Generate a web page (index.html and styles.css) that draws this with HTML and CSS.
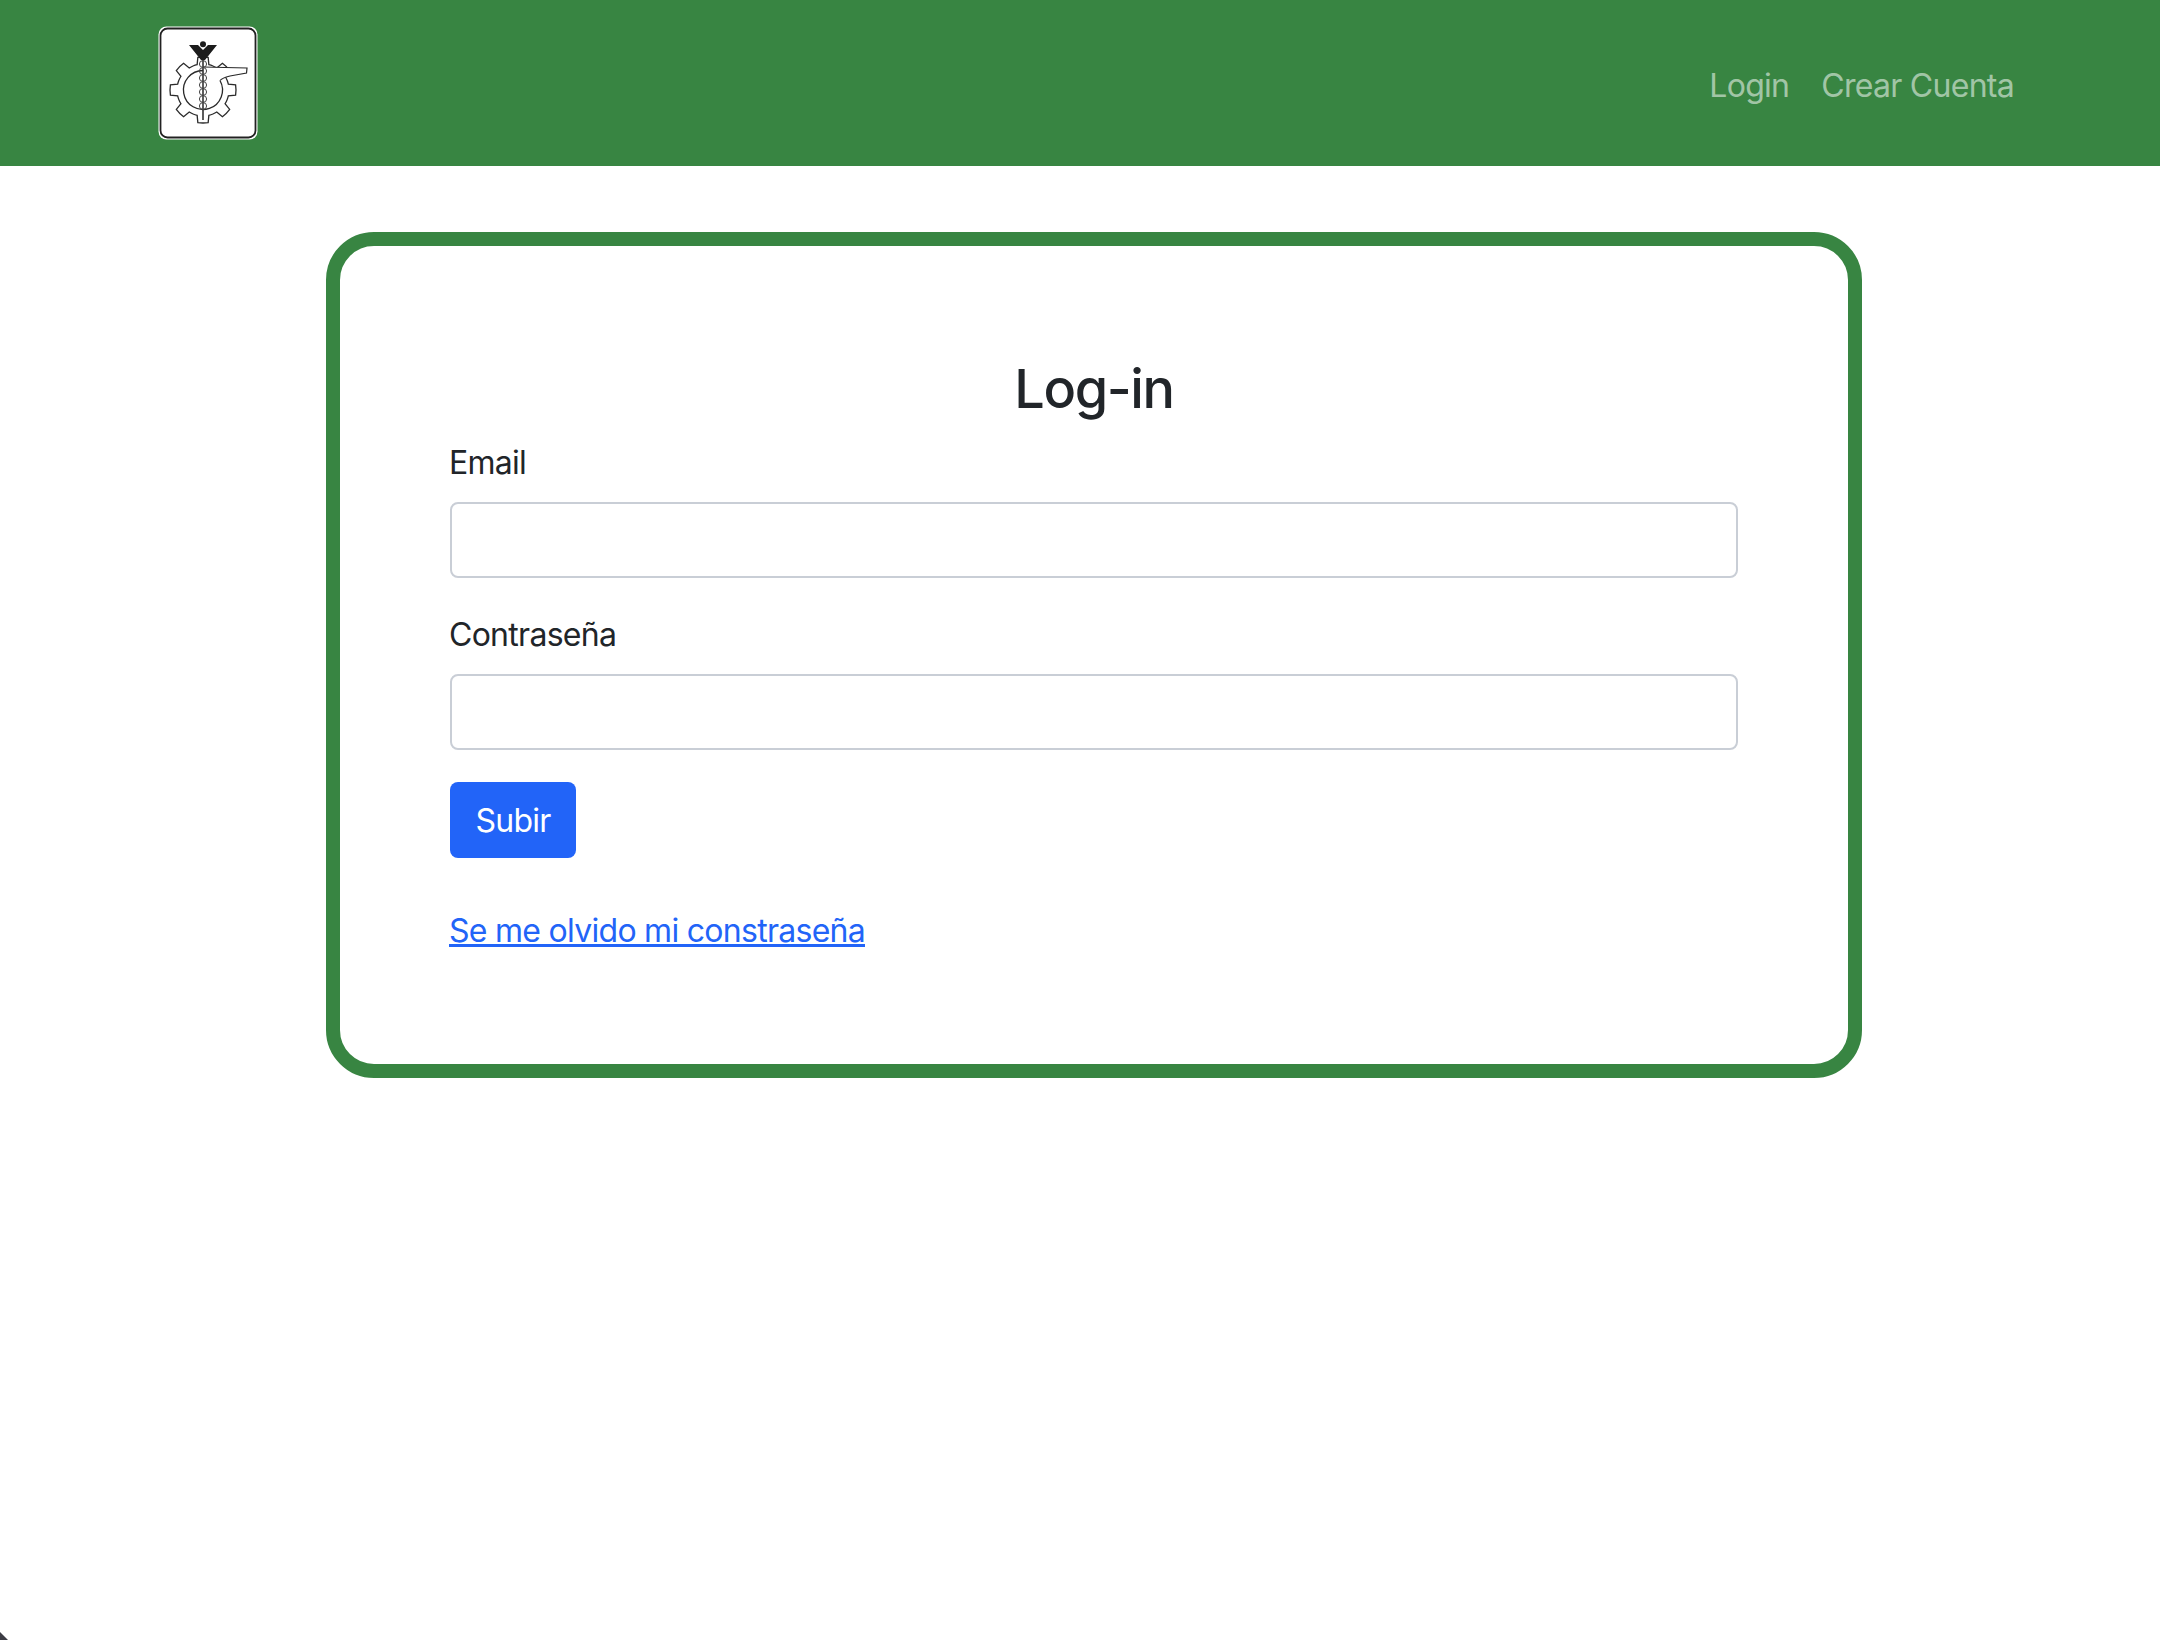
FILE: index.html
```html
<!DOCTYPE html>
<html lang="es">
<head>
<meta charset="utf-8">
<title>Log-in</title>
<link rel="stylesheet" href="styles.css">
</head>
<body>
<header class="navbar">
  <a class="brand" href="#" aria-label="Inicio">
    <svg class="logo" viewBox="0 0 100 114" width="100" height="114" aria-hidden="true">
      <defs>
        <path id="tooth" d="M35.05 40A26 26 0 0 1 39.15 38.67L39.84 31.4A33 33 0 0 1 50.16 31.4L50.85 38.67A26 26 0 0 1 54.95 40"/>
      </defs>
      <rect x="0.5" y="0.5" width="99" height="113" rx="8" fill="#fff"/>
      <rect x="2.5" y="2.5" width="95" height="109" rx="7" fill="#fff" stroke="#222" stroke-width="1.8"/>
      <g fill="none" stroke="#2a2a2a" stroke-width="1.3">
        <use href="#tooth"/>
        <use href="#tooth" transform="rotate(45 45 64)"/>
        <use href="#tooth" transform="rotate(90 45 64)"/>
        <use href="#tooth" transform="rotate(135 45 64)"/>
        <use href="#tooth" transform="rotate(180 45 64)"/>
        <use href="#tooth" transform="rotate(225 45 64)"/>
        <use href="#tooth" transform="rotate(270 45 64)"/>
        <use href="#tooth" transform="rotate(315 45 64)"/>
      </g>
      <path d="M62 54.5A19.5 19.5 0 1 1 45 44.5" fill="none" stroke="#2a2a2a" stroke-width="1.3"/>
      <path d="M45 41L89 42L88.5 47L72 50Q64 52 62 54.5L58 50L45 44.5Z" fill="#fff"/>
      <path d="M45 41L89 42L88.5 47L72 50Q64 52 62 54.5" fill="none" stroke="#2a2a2a" stroke-width="1.2"/>
      <path d="M45 30V94" stroke="#333" stroke-width="1.6"/>
      <g fill="none" stroke="#444" stroke-width="1">
        <ellipse cx="45" cy="38" rx="3.6" ry="3.4"/>
        <ellipse cx="45" cy="45" rx="3.6" ry="3.4"/>
        <ellipse cx="45" cy="52" rx="3.6" ry="3.4"/>
        <ellipse cx="45" cy="59" rx="3.6" ry="3.4"/>
        <ellipse cx="45" cy="66" rx="3.6" ry="3.4"/>
        <ellipse cx="45" cy="73" rx="3.6" ry="3.4"/>
        <ellipse cx="45" cy="80" rx="3.6" ry="3.4"/>
      </g>
      <path d="M31 19H40L45 24L50 19H59L47 34H43Z" fill="#1c1c1c"/>
      <circle cx="45" cy="18.3" r="3" fill="#1c1c1c"/>
    </svg>
  </a>
  <nav class="nav">
    <a class="nav-link" href="#">Login</a>
    <a class="nav-link" href="#">Crear Cuenta</a>
  </nav>
</header>
<main class="card">
  <h1 class="title">Log-in</h1>
  <form class="form">
    <div class="field">
      <label class="label" for="email">Email</label>
      <input class="input" id="email" type="email">
    </div>
    <div class="field">
      <label class="label" for="pass">Contraseña</label>
      <input class="input" id="pass" type="password">
    </div>
    <button class="btn" type="button">Subir</button>
  </form>
  <p class="forgot"><a class="forgot-link" href="#">Se me olvido mi constraseña</a></p>
</main>
<svg class="screen-corner" viewBox="0 0 8 8" width="8" height="8" aria-hidden="true"><path d="M0 0L8 8H0Z" fill="#3c3c44"/></svg>
</body>
</html>
```
FILE: styles.css
```css
* { box-sizing: border-box; }
html, body { height: 100%; }
body {
  margin: 0;
  min-height: 1640px;
  background: #fff;
  color: #212529;
  font-family: Inter, "Liberation Sans", sans-serif;
  font-size: 32px;
  line-height: 48px;
  letter-spacing: -0.72px;
  overflow: hidden;
  position: relative;
}
.navbar {
  height: 166px;
  background: #388542;
  display: flex;
  align-items: center;
  justify-content: space-between;
  padding: 0 130px 0 158px;
}
.brand { display: flex; }
.logo { display: block; }
.nav { display: flex; gap: 0; padding-top: 5px; }
.nav-link {
  padding: 0 16px;
  color: rgba(255, 255, 255, 0.55);
  text-decoration: none;
}
.card {
  margin: 66px 298px 0 326px;
  height: 846px;
  border: 14px solid #388542;
  border-radius: 48px;
  padding: 109px 110px 0;
}
.title {
  margin: 0 0 16px;
  text-align: center;
  font-size: 54px;
  line-height: 67px;
  font-weight: 500;
  letter-spacing: -1.4px;
}
.form { display: flex; flex-direction: column; align-items: flex-start; }
.field { width: 100%; margin-bottom: 32px; }
.label { display: block; line-height: 50px; margin: 0 0 14px -1px; }
.input {
  display: block;
  width: 100%;
  height: 76px;
  border: 2px solid #c9ced6;
  border-radius: 8px;
  background: #fff;
  font: inherit;
}
.btn {
  height: 76px;
  width: 126px;
  padding: 2px 0 0;
  border: 0;
  border-radius: 8px;
  background: #2264f8;
  color: #fff;
  font: inherit;
  letter-spacing: inherit;
}
.forgot { margin: 49px 0 0 -1px; }
.forgot-link { color: #2264f8; text-decoration: underline; }
.screen-corner { position: absolute; left: 0; bottom: 0; display: block; }
```
